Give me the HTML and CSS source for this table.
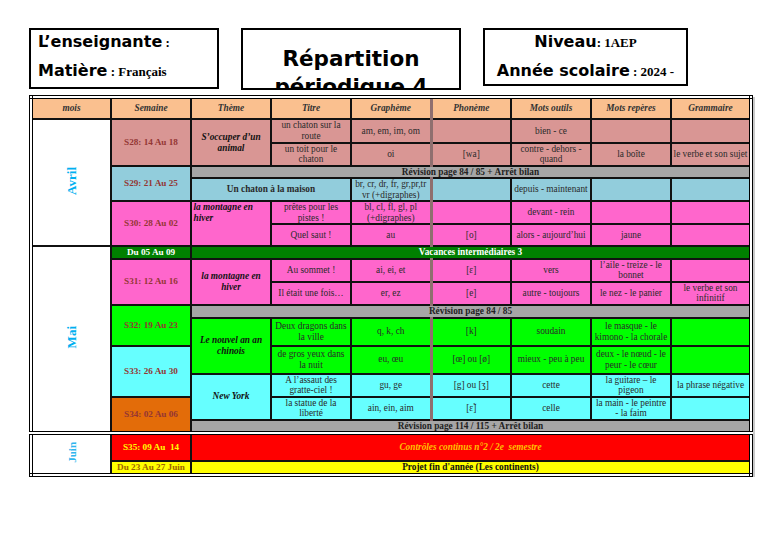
FILE: index.html
```html
<!DOCTYPE html>
<html lang="fr">
<head>
<meta charset="utf-8">
<title>Répartition périodique 4</title>
<link rel="stylesheet" href="styles.css">
</head>
<body>
<div class="top">
  <div class="box box-ens">
    <p class="line"><span class="lbl">L’enseignante</span><span class="val"> :</span></p>
    <p class="line"><span class="lbl">Matière</span><span class="val"> : Français</span></p>
  </div>
  <div class="box box-title">
    <h1 class="title">Répartition<br>périodique 4</h1>
  </div>
  <div class="box box-niv">
    <p class="line"><span class="lbl">Niveau</span><span class="val">: 1AEP</span></p>
    <p class="line"><span class="lbl">Année scolaire</span><span class="val"> : 2024 -</span></p>
  </div>
</div>

<table class="plan">
  <colgroup>
    <col><col><col><col><col><col><col><col><col>
  </colgroup>
  <thead>
    <tr class="h22">
      <th>mois</th><th>Semaine</th><th>Thème</th><th>Titre</th><th>Graphème</th><th class="ph">Phonème</th><th>Mots outils</th><th>Mots repères</th><th>Grammaire</th>
    </tr>
  </thead>
  <tbody>
    <tr class="h235 c-rose">
      <td class="mois" rowspan="6"><span class="vt">Avril</span></td>
      <td class="sem" rowspan="2">S28: 14 Au 18</td>
      <td class="theme" rowspan="2">S’occuper d’un animal</td>
      <td>un chaton sur la route</td>
      <td>am, em, im, om</td>
      <td class="ph"></td>
      <td>bien - ce</td>
      <td></td>
      <td></td>
    </tr>
    <tr class="h235 c-rose">
      <td>un toit pour le chaton</td>
      <td>oi</td>
      <td class="ph">[wa]</td>
      <td>contre - dehors - quand</td>
      <td>la boîte</td>
      <td>le verbe et son sujet</td>
    </tr>
    <tr class="h12">
      <td class="sem c-blue" rowspan="2">S29: 21 Au 25</td>
      <td class="band c-gray" colspan="7">Révision page 84 / 85 + Arrêt bilan</td>
    </tr>
    <tr class="h23 c-blue">
      <td class="theme-b" colspan="2">Un chaton à la maison</td>
      <td>br, cr, dr, fr, gr,pr,tr vr (+digraphes)</td>
      <td class="ph"></td>
      <td>depuis - maintenant</td>
      <td></td>
      <td></td>
    </tr>
    <tr class="h23 c-pink">
      <td class="sem" rowspan="2">S30: 28 Au 02</td>
      <td class="theme tl" rowspan="2">la montagne en hiver</td>
      <td>prêtes pour les pistes !</td>
      <td>bl, cl, fl, gl, pl (+digraphes)</td>
      <td class="ph"></td>
      <td>devant - rein</td>
      <td></td>
      <td></td>
    </tr>
    <tr class="h22 c-pink">
      <td>Quel saut !</td>
      <td>au</td>
      <td class="ph">[o]</td>
      <td>alors - aujourd’hui</td>
      <td>jaune</td>
      <td></td>
    </tr>
    <tr class="h12 c-dkgreen">
      <td class="mois" rowspan="9"><span class="vt">Mai</span></td>
      <td class="sem sem-w">Du 05 Au 09</td>
      <td class="band band-w" colspan="7">Vacances intermédiaires 3</td>
    </tr>
    <tr class="h23 c-pink">
      <td class="sem" rowspan="2">S31: 12 Au 16</td>
      <td class="theme" rowspan="2">la montagne en hiver</td>
      <td>Au sommet !</td>
      <td>ai, ei, et</td>
      <td class="ph">[ɛ]</td>
      <td>vers</td>
      <td>l’aile - treize - le bonnet</td>
      <td></td>
    </tr>
    <tr class="h23 c-pink">
      <td>Il était une fois…</td>
      <td>er, ez</td>
      <td class="ph">[e]</td>
      <td>autre - toujours</td>
      <td>le nez - le panier</td>
      <td>le verbe et son infinitif</td>
    </tr>
    <tr class="h13">
      <td class="sem c-lime" rowspan="2">S32: 19 Au 23</td>
      <td class="band c-gray" colspan="7">Révision page 84 / 85</td>
    </tr>
    <tr class="h28 c-lime">
      <td class="theme" rowspan="2">Le nouvel an an chinois</td>
      <td>Deux dragons dans la ville</td>
      <td>q, k, ch</td>
      <td class="ph">[k]</td>
      <td>soudain</td>
      <td>le masque - le kimono - la chorale</td>
      <td></td>
    </tr>
    <tr class="h28 c-lime">
      <td class="sem c-cyan" rowspan="2">S33: 26 Au 30</td>
      <td>de gros yeux dans la nuit</td>
      <td>eu, œu</td>
      <td class="ph">[œ] ou [ø]</td>
      <td>mieux - peu à peu</td>
      <td>deux - le nœud - le peur - le cœur</td>
      <td></td>
    </tr>
    <tr class="h23 c-cyan">
      <td class="theme" rowspan="2">New York</td>
      <td>A l’assaut des gratte-ciel !</td>
      <td>gu, ge</td>
      <td class="ph">[g] ou [ʒ]</td>
      <td>cette</td>
      <td>la guitare – le pigeon</td>
      <td>la phrase négative</td>
    </tr>
    <tr class="h23 c-cyan">
      <td class="sem c-orange" rowspan="2">S34: 02 Au 06</td>
      <td>la statue de la liberté</td>
      <td>ain, ein, aim</td>
      <td class="ph">[ɛ̃]</td>
      <td>celle</td>
      <td>la main - le peintre - la faim</td>
      <td></td>
    </tr>
    <tr class="h12">
      <td class="band c-gray" colspan="7">Révision page 114 / 115 + Arrêt bilan</td>
    </tr>
    <tr class="h28 c-red juin">
      <td class="mois" rowspan="2"><span class="vt vt-sm">Juin</span></td>
      <td class="sem sem-y">S35: 09 Au&nbsp; 14</td>
      <td class="band band-ctrl" colspan="7">Contrôles continus n°2 / 2e&nbsp; semestre</td>
    </tr>
    <tr class="h14 c-yellow">
      <td class="sem sem-o">Du 23 Au 27 Juin</td>
      <td class="band band-k" colspan="7">Projet fin d'année (Les continents)</td>
    </tr>
  </tbody>
</table>
</body>
</html>
```

FILE: styles.css
```css
html, body {
  margin: 0;
  padding: 0;
  background: #fff;
}

body {
  padding: 28px 0 0 29px;
  font-family: "Liberation Serif", "Times New Roman", serif;
  color: #000;
}

/* ---------- header boxes ---------- */
.top {
  display: flex;
  align-items: flex-start;
  gap: 22px;
}

.box {
  border: 2px solid #000;
  box-sizing: border-box;
  overflow: hidden;
}

.box-ens {
  width: 190px;
  height: 61px;
  padding: 1px 0 0 7px;
}

.box-title {
  width: 220px;
  height: 62px;
  padding-top: 15px;
  text-align: center;
}

.box-niv {
  width: 205px;
  height: 58px;
  padding-top: 1px;
  text-align: center;
}

.line {
  margin: 0 0 6px;
  line-height: 22px;
  white-space: nowrap;
}

.lbl {
  font-family: "DejaVu Sans", sans-serif;
  font-weight: bold;
  font-size: 16px;
}

.val {
  font-family: "Liberation Serif", serif;
  font-weight: bold;
  font-size: 13px;
}

.title {
  margin: 0;
  font-family: "DejaVu Sans", sans-serif;
  font-weight: bold;
  font-size: 21.5px;
  line-height: 28px;
}

/* ---------- table ---------- */
.plan {
  margin-top: 5px;
  width: 724px;
  border-collapse: collapse;
  table-layout: fixed;
  border: 4px double #000;
  box-shadow: 2px 2px 0 #c9c9c9;
  font-family: "Liberation Serif", "Times New Roman", serif;
  font-size: 9.3px;
  line-height: 10.5px;
  color: #2a2a2a;
}

.plan th,
.plan td {
  border: 2px solid #111;
  padding: 0 1.5px;
  text-align: center;
  vertical-align: middle;
  overflow: hidden;
}

.plan th {
  background: #fac08f;
  font-weight: bold;
  font-style: italic;
  color: #333;
}

.plan .ph {
  border-left: 3px solid rgba(95, 50, 50, 0.7);
}

.plan .juin td {
  border-top: 4px double #000;
}

/* row heights */
.h12 { height: 12px; }
.h13 { height: 13px; }
.h14 { height: 14px; }
.h22 { height: 22px; }
.h23 { height: 23px; }
.h235 { height: 23.5px; }
.h24 { height: 24px; }
.h28 { height: 28px; }
.h30 { height: 30px; }

/* colours */
.c-rose { background: #d99694; }
.c-blue { background: #92cddc; }
.c-pink { background: #ff66cc; }
.c-dkgreen { background: #008000; }
.c-gray { background: #a6a6a6; }
.c-lime { background: #00ff00; }
.c-cyan { background: #66ffff; }
.c-orange { background: #e36c09; }
.c-red { background: #ff0000; }
.c-yellow { background: #ffff00; }

.plan .mois {
  background: #fff;
}

.vt {
  display: inline-block;
  writing-mode: vertical-rl;
  transform: rotate(180deg);
  font-weight: bold;
  font-size: 13px;
  line-height: 14px;
  color: #00b0f0;
}

.vt-sm {
  font-size: 11px;
  color: #2fb6ee;
}

.sem {
  font-weight: bold;
  font-size: 9.2px;
  color: #943634;
}

.sem-w { color: #fff; }
.sem-y { color: #ffff00; }
.sem-o { color: #9c6500; }

.theme {
  font-weight: bold;
  font-style: italic;
  color: #111;
}

.theme-b {
  font-weight: bold;
  color: #2a2a2a;
}

.plan .tl {
  text-align: left;
  vertical-align: top;
}

.band {
  font-weight: bold;
  line-height: 10px;
  color: #222;
}

.band-w { color: #fff; }

.band-ctrl {
  color: #ffc000;
  font-style: italic;
}

.band-k { color: #111; }
```
